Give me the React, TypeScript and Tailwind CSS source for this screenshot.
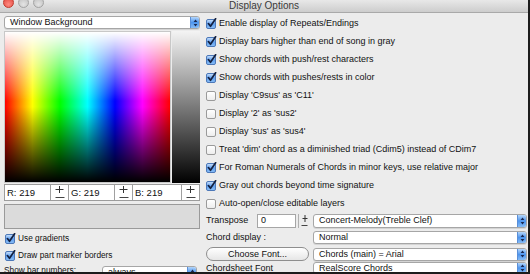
import React from "react";

const CheckBox = ({ checked }: { checked: boolean }) =>
  checked ? (
    <svg width="11" height="11" viewBox="0 0 11 11" className="shrink-0">
      <defs>
        <linearGradient id="cbg" x1="0" y1="0" x2="0" y2="1">
          <stop offset="0" stopColor="#cfe4fc" />
          <stop offset="0.5" stopColor="#5f9ff0" />
          <stop offset="1" stopColor="#8cc0f7" />
        </linearGradient>
      </defs>
      <rect x="0.5" y="1.5" width="9" height="9" rx="1.5" fill="url(#cbg)" stroke="#4d78b8" />
      <path d="M2.4 5.6 L4.5 8.3 L9.6 0.8" fill="none" stroke="#13203f" strokeWidth="1.7" strokeLinecap="round" strokeLinejoin="round" />
    </svg>
  ) : (
    <span className="shrink-0 w-[10px] h-[10px] mt-[1px] mr-[1px] rounded-[2px] border border-[#9a9a9a] bg-gradient-to-b from-white to-[#ededed]" />
  );

const Arrows = () => (
  <span className="w-[9px] h-full rounded-r-[2px] border-l border-[#5a8fd8] bg-gradient-to-b from-[#b4d6fa] via-[#4d95ee] to-[#86bcf6] flex items-center justify-center">
    <svg width="5" height="8" viewBox="0 0 5 8">
      <path d="M2.5 0.6 L4.4 3.1 H0.6Z M2.5 7.4 L4.4 4.9 H0.6Z" fill="#1a2850" />
    </svg>
  </span>
);

const Select = ({ text, className }: { text: string; className: string }) => (
  <div className={`flex items-center bg-white border border-[#a6a6a6] rounded-[3px] shadow-[0_1px_0_rgba(0,0,0,0.1)] ${className}`}>
    <span className="flex-1 pl-[5px] truncate leading-none">{text}</span>
    <Arrows />
  </div>
);

const CheckRow = ({ checked, label }: { checked: boolean; label: string }) => (
  <div className="h-[18px] flex items-center gap-[2px] whitespace-nowrap">
    <CheckBox checked={checked} />
    <span className="leading-none">{label}</span>
  </div>
);

const Plus = ({ w = 9 }: { w?: number }) => (
  <svg width={w} height="7" viewBox={`0 0 ${w} 7`}>
    <path d={`M${w / 2} 0 V7 M0.5 3.5 H${w - 0.5}`} stroke="#333" strokeWidth="1" />
  </svg>
);
const Minus = ({ w = 10 }: { w?: number }) => (
  <svg width={w} height="3" viewBox={`0 0 ${w} 3`}>
    <path d={`M0.5 1.5 H${w - 0.5}`} stroke="#444" strokeWidth="1" />
  </svg>
);

const PlusMinus = () => (
  <div className="w-[18px] h-full border-l border-[#a0a0a0] flex flex-col items-center justify-center gap-[3px]">
    <Plus />
    <Minus />
  </div>
);

const RgbCell = ({ label, last }: { label: string; last?: boolean }) => (
  <div className={`flex h-full ${last ? "flex-1" : "w-[64px] border-r border-[#a0a0a0]"}`}>
    <span className="flex-1 flex items-center pl-[2px] leading-none text-[9.5px]">{label}</span>
    <PlusMinus />
  </div>
);

const rightChecks: [boolean, string][] = [
  [true, "Enable display of Repeats/Endings"],
  [true, "Display bars higher than end of song in gray"],
  [true, "Show chords with push/rest characters"],
  [true, "Show chords with pushes/rests in color"],
  [false, "Display 'C9sus' as 'C11'"],
  [false, "Display '2' as 'sus2'"],
  [false, "Display 'sus' as 'sus4'"],
  [false, "Treat 'dim' chord as a diminished triad (Cdim5) instead of CDim7"],
  [true, "For Roman Numerals of Chords in minor keys, use relative major"],
  [true, "Gray out chords beyond time signature"],
  [false, "Auto-open/close editable layers"],
];

export default function App() {
  return (
    <div className="w-[530px] h-[274px] overflow-hidden box-border bg-[#ececec] border-r-2 border-b-2 border-[#1c1c1c] font-['Liberation_Sans',Arial,sans-serif] text-[9px] text-[#111]">
      {/* title bar */}
      <div className="relative h-[13px] bg-gradient-to-b from-[#e8e8e8] to-[#cdcdcd] border-b border-[#a9a9a9] flex items-center justify-center">
        <div className="absolute left-[3px] top-[-3px] flex gap-[4px]">
          <span className="w-[11px] h-[11px] rounded-full bg-[radial-gradient(circle_at_50%_70%,#ff8a80,#e0443c)] border border-[#c0392b]" />
          <span className="w-[11px] h-[11px] rounded-full bg-[radial-gradient(circle_at_50%_70%,#e4e4e4,#bcbcbc)] border border-[#a3a3a3]" />
          <span className="w-[11px] h-[11px] rounded-full bg-[radial-gradient(circle_at_50%_70%,#e4e4e4,#bcbcbc)] border border-[#a3a3a3]" />
        </div>
        <span className="text-[10px] leading-none text-[#3a3a3a]">Display Options</span>
      </div>

      <div className="flex">
        {/* left column */}
        <div className="ml-[4px] w-[196px] flex flex-col">
          <Select text="Window Background" className="mt-[3px] h-[13px]" />
          <div className="mt-[2px] h-[152px] flex gap-[1px]">
            <div className="w-[167px] h-full bg-[linear-gradient(to_right,#ff0000,#ffff00,#00ff00,#00ffff,#0000ff,#ff00ff,#ff0000)] border border-[#c8c8c8]">
              <div className="w-full h-full bg-[linear-gradient(to_bottom,#ffffff_0%,#ffffff00_46%,#00000000_50%,#000000_100%)]" />
            </div>
            <div className="flex-1 h-full bg-[linear-gradient(to_bottom,#f4f4f4,#000000)]" />
          </div>
          <div className="mt-[1px] h-[17px] flex bg-white border border-[#9c9c9c]">
            <RgbCell label="R: 219" />
            <RgbCell label="G: 219" />
            <RgbCell label="B: 219" last />
          </div>
          <div className="mt-[3px] h-[25px] bg-[#dbdbdb] border border-[#9a9a9a]" />
          <div className="mt-[1px] h-[17px] flex items-center gap-[2px] pl-[1px] text-[8.3px]">
            <CheckBox checked />
            <span className="leading-none">Use gradients</span>
          </div>
          <div className="h-[17px] flex items-center gap-[2px] pl-[1px] text-[8.3px]">
            <CheckBox checked />
            <span className="leading-none">Draw part marker borders</span>
          </div>
          <div className="h-[13px] flex items-start justify-between">
            <span className="leading-none mt-[2px] text-[8.3px]">Show bar numbers:</span>
            <Select text="always" className="w-[95px] h-[13px] mr-[3px] mt-[2px]" />
          </div>
        </div>

        {/* right column */}
        <div className="ml-[6px] flex-1 pr-[1px] pt-[1px] flex flex-col">
          {rightChecks.map(([c, l]) => (
            <CheckRow key={l} checked={c} label={l} />
          ))}
          <div className="h-[17px] flex items-center">
            <span className="w-[51px] leading-none">Transpose</span>
            <div className="w-[39px] h-[14px] bg-white border border-[#a6a6a6] flex items-center pl-[3px] leading-none">0</div>
            <div className="ml-[2px] w-[12px] h-[14px] border-l border-[#b0b0b0] flex flex-col items-center justify-center gap-[2px]">
              <Plus w={6} />
              <Minus w={7} />
            </div>
            <Select text="Concert-Melody(Treble Clef)" className="ml-auto w-[214px] h-[14px]" />
          </div>
          <div className="h-[17px] flex items-center">
            <span className="leading-none">Chord display :</span>
            <Select text="Normal" className="ml-auto w-[214px] h-[13px]" />
          </div>
          <div className="h-[16px] flex items-center">
            <div className="w-[103px] h-[14px] rounded-full border border-[#8e8e8e] bg-gradient-to-b from-white to-[#e6e6e6] flex items-center justify-center leading-none">
              Choose Font...
            </div>
            <Select text="Chords (main) = Arial" className="ml-auto w-[214px] h-[13px]" />
          </div>
          <div className="h-[13px] flex items-start">
            <span className="leading-none mt-[2px]">Chordsheet Font</span>
            <Select text="RealScore Chords" className="ml-auto w-[214px] h-[12px]" />
          </div>
        </div>
      </div>
    </div>
  );
}
